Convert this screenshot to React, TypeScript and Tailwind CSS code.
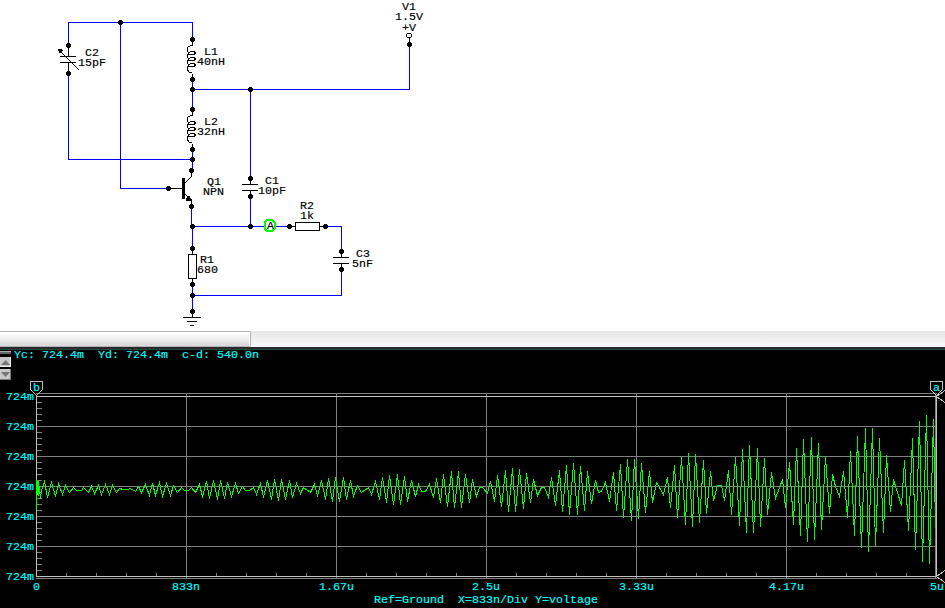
const MONO = '[font-family:"Liberation_Mono",monospace]';

const WAVE =
  "36,480 36,509 37,481 38,495 38,481 40,498 41,490 44,481 47,497 51,482 55,496 58,483 62,494 65,485 69,492 73,487 76,490 81,490 83,487 88,492 91,486 94,493 98,485 101,494 105,484 109,494 112,485 116,492 119,488 123,489 127,489 130,488 135,491 138,486 141,492 145,484 149,495 152,483 155,495 159,482 162,496 166,483 170,495 173,485 177,492 181,487 184,490 188,490 191,487 195,492 199,484 202,496 206,481 209,498 213,480 217,499 220,480 224,498 227,482 231,496 235,483 238,493 242,486 245,490 249,490 253,487 256,494 260,483 263,497 267,480 271,499 274,479 278,500 281,479 285,499 289,480 292,497 296,483 300,493 303,487 310,492 314,484 317,495 321,480 325,499 328,478 332,501 335,477 339,501 343,477 346,499 350,480 353,496 357,485 361,492 368,487 371,494 375,481 379,499 382,477 386,502 389,475 393,504 397,474 400,504 404,476 407,501 411,480 415,496 418,484 421,491 425,491 429,484 433,497 436,478 440,502 443,474 447,506 451,471 454,507 458,471 461,507 465,474 469,502 472,479 476,496 479,487 482,487 487,493 490,481 494,501 497,475 501,506 505,470 508,511 512,468 515,511 519,469 523,508 526,473 530,502 533,479 537,495 541,487 544,487 548,497 551,477 555,505 559,470 562,511 566,465 569,514 573,463 577,514 580,466 584,510 587,471 591,503 595,480 598,492 601,491 605,482 609,501 613,472 616,510 620,464 623,517 627,459 631,520 634,459 638,518 641,463 645,512 649,471 652,502 656,482 663,494 667,477 670,507 674,465 677,517 681,457 685,524 688,453 692,526 695,454 699,522 703,460 706,513 710,471 713,500 717,485 721,485 724,500 728,470 731,514 735,457 739,525 742,449 746,532 749,445 753,532 757,448 760,526 764,458 767,514 771,472 775,498 782,479 785,507 789,462 793,524 796,448 800,535 803,439 807,541 811,437 814,539 818,443 821,529 825,456 829,513 832,474 835,486 839,496 843,471 847,517 850,451 854,535 857,436 861,547 865,428 868,551 872,428 875,546 879,438 883,532 886,455 890,511 893,479 901,505 904,460 908,530 912,438 915,549 919,421 922,561 926,415 929,563 933,419 935,528";

const DOTS: [number, number][] = [
  [120, 22], [68, 45], [68, 73], [192, 39], [192, 79], [192, 89], [250, 89], [192, 109],
  [192, 149], [192, 159], [191, 170], [168, 188], [191, 206], [192, 226], [250, 178],
  [250, 196], [250, 226], [289, 226], [325, 226], [341, 251], [341, 269], [192, 248],
  [192, 284], [192, 295], [192, 311], [409, 44],
];

function Label({ x, y, children }: { x: number; y: number; children: string }) {
  return (
    <text x={x} y={y} xmlSpace="preserve" textLength={children.length * 7} lengthAdjust="spacingAndGlyphs">
      {children}
    </text>
  );
}

function Inductor({ y }: { y: number }) {
  return (
    <path
      transform={`translate(0 ${y})`}
      d="M192.500 3V6.500H190.500L187.500 8.500V12L189.500 15.500H193.500L195.500 14.500V13.500L193.500 12.500H190.500L187.500 16V18L189.500 21.500H193.500L195.500 20.500V19.500L193.500 18.500H190.500L187.500 22V24L189.500 27.500H193.500L195.500 26.500V25.500L193.500 24.500H190.500L187.500 28V31L189.500 33.500H191.500M192.500 35V40"
    />
  );
}

function Schematic() {
  return (
    <svg className={`block h-[331px] w-full shrink-0 text-[10px] ${MONO}`} viewBox="0 0 945 331" shapeRendering="crispEdges">
      <path
        d="M68.500 45V22.500H192.500V39M68.500 73V159.500H192.500M120.500 22V188.500H168M192.500 79V109M192.500 89.500H409.500V44M192.500 149V170M250.500 89V178M250.500 196V226M191.500 206V226M192.500 226.500H289M325 226.500H341.500V251M341.500 269V295.500H192.500M192.500 226V248M192.500 284V311"
        fill="none"
        stroke="#0000ff"
      />
      <g fill="none" stroke="#000">
        <path d="M68.500 45V56.500M60 56.500H76M60 62.500H76M68.500 62.500V73M60.500 51.500L79 70" />
        <Inductor y={39} />
        <Inductor y={109} />
        <path d="M168 188.500H182M184.500 183.500L191.500 176.500V170M184.500 193.500L191.500 200.500V206" />
        <path d="M183.500 178V199" strokeWidth="3" />
        <path d="M250.500 178V184.500M242 184.500H258M242 190.500H258M250.500 190.500V196" />
        <path d="M289 226.500H295.500V222.500H319.500V230.500H295.500V226.500M319.500 226.500H325" />
        <path d="M341.500 251V257.500M333 257.500H349M333 263.500H349M341.500 263.500V269" />
        <path d="M192.500 248V254.500M188.500 254.500H196.500V278.500H188.500ZM192.500 278.500V284" />
        <path d="M192.500 311V317.500M183 317.500H201M187 321.500H197M190 325.500H194" />
        <path d="M409.500 38V44" />
        <circle cx="409" cy="35.500" r="2.500" fill="#fff" />
      </g>
      <path d="M58 49H62V50H63L61 52V53H59V51H58ZM191 201H186V199L189 195L192 200Z" />
      {DOTS.map(([x, y]) => (
        <path key={`${x}-${y}`} d={`M${x - 1} ${y - 2}h3v1h1v3h-1v1h-3v-1h-1v-3h1z`} />
      ))}
      <path d="M267 220H272L275 223V228L272 231H267L264.500 228V223Z" fill="#fff" stroke="#00ff00" strokeWidth="2" />
      <g stroke="#000" strokeWidth="0.15">
        <Label x={85} y={56}>C2</Label>
        <Label x={78} y={66}>15pF</Label>
        <Label x={204} y={55}>L1</Label>
        <Label x={197} y={65}>40nH</Label>
        <Label x={204} y={125}>L2</Label>
        <Label x={197} y={135}>32nH</Label>
        <Label x={207} y={185}>Q1</Label>
        <Label x={203} y={195}>NPN</Label>
        <Label x={265} y={184}>C1</Label>
        <Label x={258} y={194}>10pF</Label>
        <Label x={300} y={209}>R2</Label>
        <Label x={300} y={219}>1k</Label>
        <Label x={356} y={257}>C3</Label>
        <Label x={352} y={267}>5nF</Label>
        <Label x={200} y={263}>R1</Label>
        <Label x={197} y={273}>680</Label>
        <Label x={402} y={10}>V1</Label>
        <Label x={395} y={20}>1.5V</Label>
        <Label x={402} y={31}>+V</Label>
        <Label x={267} y={229}>A</Label>
      </g>
    </svg>
  );
}

function ScrollStrip() {
  return (
    <div className="flex h-[16px] shrink-0 bg-linear-to-b from-[#e6e6e6] to-[#fafafa]">
      <div className="h-[16px] w-[251px] rounded-r-[2px] border-y border-r border-[#b4b4b4] bg-linear-to-b from-white via-[#f0f0f0] to-[#d6d6d6] shadow-[inset_-1px_1px_#fff]" />
    </div>
  );
}

function ScopeHeader() {
  return (
    <div className="flex h-[30px] shrink-0">
      <div className="flex w-[11px] flex-col">
        <div className="mt-px h-[3px] border-t border-[#aaa] bg-[#666]" />
        <div className="mt-[3px] flex h-[10px] items-center justify-center bg-[#c8c8c8] shadow-[inset_-1px_-1px_#eee]">
          <svg width="9" height="5"><path d="M0 5L4.500 0L9 5Z" fill="#777" /></svg>
        </div>
        <div className="mt-[2px] flex h-[11px] items-center justify-center bg-[#c8c8c8] shadow-[inset_-1px_-1px_#777]">
          <svg width="9" height="5"><path d="M0 0H9L4.500 5Z" fill="#777" /></svg>
        </div>
      </div>
      <svg className={`ml-[3px] block h-[12px] w-[250px] fill-[#00ffff] text-[10px] ${MONO}`} stroke="#00ffff" strokeWidth="0.15">
        <Label x={0} y={8}>Yc: 724.4m  Yd: 724.4m  c-d: 540.0n</Label>
      </svg>
    </div>
  );
}

function Scope() {
  const rows = [426.5, 456.5, 486.5, 516.5, 546.5];
  const cols = [186.5, 336.5, 486.5, 636.5, 786.5];
  const yTicks = Array.from({ length: 30 }, (_, i) => 396.5 + i * 6);
  const xTicks = Array.from({ length: 30 }, (_, i) => 36.5 + i * 30);
  return (
    <svg className={`block h-[228px] w-full shrink-0 text-[10px] ${MONO}`} viewBox="0 380 945 228" shapeRendering="crispEdges">
      <g stroke="#808080" fill="none">
        <path d="M36 393.500H937M36 578.500H937" />
        {rows.map((y) => <path key={y} d={`M36 ${y}H936`} />)}
        {cols.map((x) => <path key={x} d={`M${x} 394V579`} />)}
        {yTicks.map((y) => <path key={y} d={`M37 ${y}H42`} />)}
        {xTicks.map((x) => <path key={x} d={`M${x} 573V577`} />)}
        <path d="M935.500 394V579" />
      </g>
      <g stroke="#c0c0c0" fill="none">
        <path d="M36.500 396V577M36 396.500H937M36 576.500H937M936.500 396V577" />
        <path d="M30.500 381.500H42.500V389.500L36.500 395.500L30.500 389.500ZM930.500 381.500H942.500V389.500L936.500 395.500L930.500 389.500Z" />
        <path d="M945 390.500L936.500 396.500L945 402.500M945 570.500L936.500 576.500L945 582.500" />
      </g>
      <path d="M36.500 480V509" stroke="#00ff00" />
      <polyline points={WAVE} transform="translate(.5 .5)" fill="none" stroke="#00ff00" />
      <g fill="#00ffff" stroke="#00ffff" strokeWidth="0.15">
        <Label x={33} y={391}>b</Label>
        <Label x={933} y={391}>a</Label>
        {[396, ...rows, 576].map((y) => (
          <Label key={y} x={6} y={Math.floor(y) + 4}>724m</Label>
        ))}
        <Label x={33} y={590}>0</Label>
        <Label x={172} y={590}>833n</Label>
        <Label x={319} y={590}>1.67u</Label>
        <Label x={472} y={590}>2.5u</Label>
        <Label x={619} y={590}>3.33u</Label>
        <Label x={769} y={590}>4.17u</Label>
        <Label x={930} y={590}>5u</Label>
        <Label x={374} y={603}>Ref=Ground  X=833n/Div Y=voltage</Label>
      </g>
    </svg>
  );
}

export default function App() {
  return (
    <main className="flex h-[608px] w-[945px] flex-col overflow-hidden bg-white">
      <Schematic />
      <ScrollStrip />
      <section className="flex h-[261px] flex-col bg-black">
        <div className="h-[3px] shrink-0 border-b border-[#204a40] bg-[#29292b]" />
        <ScopeHeader />
        <Scope />
      </section>
    </main>
  );
}
